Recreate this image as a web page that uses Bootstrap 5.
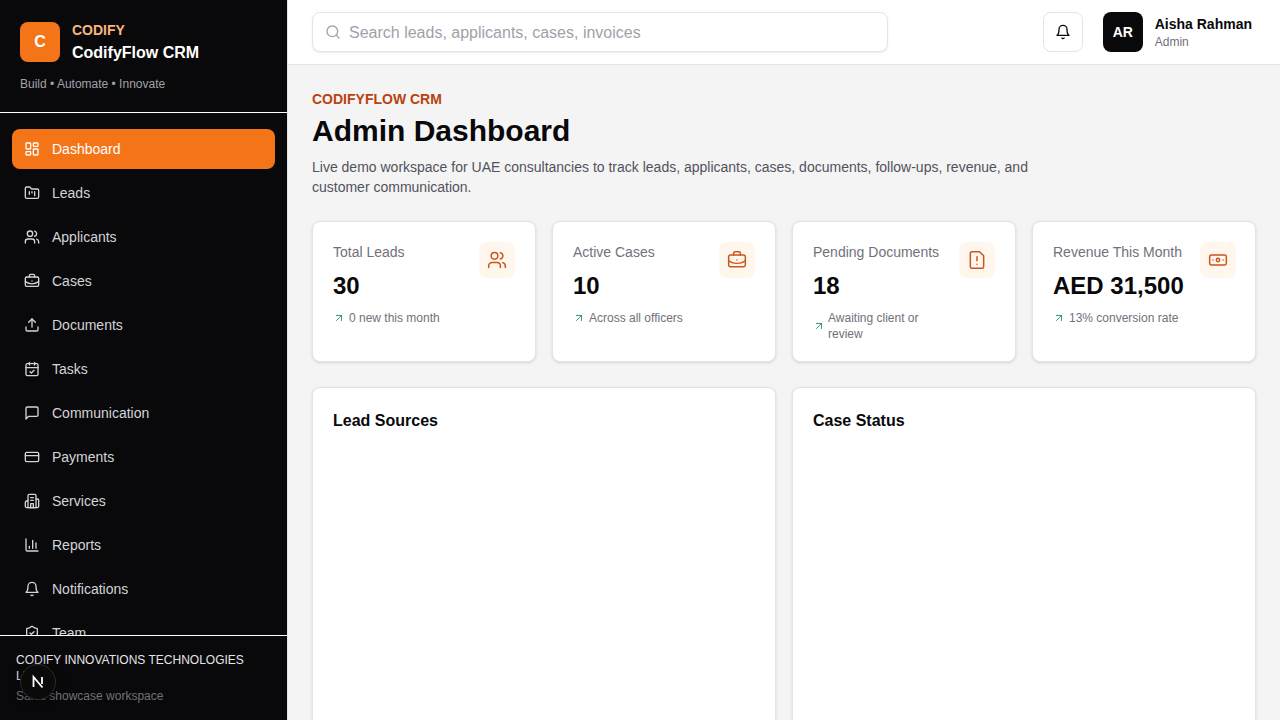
<!DOCTYPE html>
<html lang="en">
<head>
<meta charset="utf-8">
<title>CodifyFlow CRM</title>
<link href="https://cdn.jsdelivr.net/npm/bootstrap@5.3.0/dist/css/bootstrap.min.css" rel="stylesheet">
<style>
html,body{height:720px;overflow:hidden}
body{font-family:"Liberation Sans",Arial,sans-serif;background:#f4f4f5;color:#09090b}
svg.ico{fill:none;stroke:currentColor;stroke-width:2;stroke-linecap:round;stroke-linejoin:round;flex:none}
.side{width:288px;height:720px;background:#09090b;flex:none;border-right:1px solid #e4e4e7}
.brandbox{height:113px;padding:20px 20px 0;border-bottom:1px solid #fff;flex:none}
.brandrow{gap:12px;height:44px}
.brandtext{align-self:flex-start}
.logo{width:40px;height:40px;background:#f47518;color:#fff;border-radius:8px;font-weight:700;font-size:16px}
.brand-top{font-size:14px;line-height:20px;font-weight:700;color:#f5b77f}
.brand-name{font-size:16px;line-height:24px;font-weight:700;color:#fff;margin-top:1px}
.tagline{font-size:12px;line-height:16px;color:#a1a1aa;margin-top:12px}
.sidenav{flex:1 1 0;min-height:0;overflow:hidden;padding:16px 12px 0;gap:4px}
.sidelink{height:40px;flex:none;padding:0 12px;gap:12px;border-radius:8px;color:#d4d4d8;font-size:14px;text-decoration:none}
.sidelink.on{background:#f47518;color:#fff}
.sidefoot{height:85px;flex:none;border-top:1px solid #fff;padding:16px 16px 0;font-size:12px;line-height:16px;color:#e4e4e7}
.footname{width:240px}
.sidefoot p{color:#71717a}
.nxt{position:fixed;left:20px;top:664px;width:36px;height:36px;border-radius:50%;background:#0a0a0a;border:1px solid #2b2b2b;color:#fff;box-shadow:0 0 8px rgba(0,0,0,.5)}
.mainwrap{min-width:0}
.topbar{height:65px;background:#fff;border-bottom:1px solid #e4e4e7;padding:0 24px;flex:none}
.searchbox{width:576px;height:40px;border:1px solid #e4e4e7;border-radius:8px;background:#fff;box-shadow:0 1px 2px rgba(0,0,0,.08);padding:1px 12px 0;gap:8px;color:#a1a1aa;font-size:16px}
.searchbox svg{margin-top:-1px}
.topright{gap:16px}
.bellbtn{width:40px;height:40px;border:1px solid #e4e4e7;border-radius:8px;background:#fff;color:#09090b;padding:0}
.userchip{gap:12px;padding:0 4px}
.avatar{width:40px;height:40px;border-radius:8px;background:#09090b;color:#fff;font-weight:700;font-size:14px}
.uname{font-size:14px;line-height:20px;font-weight:700}
.urole{font-size:12px;line-height:16px;color:#71717a}
.workspace{padding:24px;min-height:0;overflow:hidden}
.eyebrow{font-size:14px;line-height:20px;font-weight:700;color:#b8430f}
.pagetitle{font-size:30px;line-height:36px;font-weight:700;margin:4px 0 8px}
.intro{font-size:14px;line-height:20px;color:#52525b;width:768px;margin:0}
.statgrid{display:grid;grid-template-columns:repeat(4,minmax(0,1fr));gap:16px;margin-top:24px}
.statcard{height:141px;background:#fff;border:1px solid #e4e4e7;border-radius:8px;box-shadow:0 1px 3px rgba(0,0,0,.12);padding:20px}
.statlabel{font-size:14px;line-height:20px;color:#71717a}
.statval{font-size:24px;line-height:32px;font-weight:700;margin-top:8px}
.statnote{font-size:12px;line-height:16px;color:#71717a;margin-top:8px;gap:4px}
.statnote.tight{gap:3px;width:124px}
.statnote svg{color:#3b9a7c}
.staticon{width:36px;height:36px;border-radius:8px;background:#fff7ed;color:#c9561c;flex:none}
.staticon.nudge{margin-right:-1px}
.staticon svg.ico{stroke-width:1.8}
.chartgrid{display:grid;grid-template-columns:repeat(2,minmax(0,1fr));gap:16px;margin-top:25px}
.chartcard{height:500px;background:#fff;border:1px solid #e4e4e7;border-radius:8px;box-shadow:0 1px 3px rgba(0,0,0,.12);padding:21px 20px 20px}
.charttitle{font-size:16px;line-height:24px;font-weight:700;margin:0}
</style>
</head>
<body class="d-flex">
<aside class="side d-flex flex-column">
  <div class="brandbox">
    <div class="brandrow d-flex align-items-center">
      <div class="logo d-flex align-items-center justify-content-center">C</div>
      <div class="brandtext"><div class="brand-top">CODIFY</div><div class="brand-name">CodifyFlow CRM</div></div>
    </div>
    <div class="tagline">Build • Automate • Innovate</div>
  </div>
  <nav class="sidenav d-flex flex-column">
    <a class="sidelink on d-flex align-items-center" href="#"><svg class="ico" width="16" height="16" viewBox="0 0 24 24"><rect x="3" y="3" width="7" height="9" rx="1"/><rect x="14" y="3" width="7" height="5" rx="1"/><rect x="14" y="12" width="7" height="9" rx="1"/><rect x="3" y="16" width="7" height="5" rx="1"/></svg>Dashboard</a>
    <a class="sidelink d-flex align-items-center" href="#"><svg class="ico" width="16" height="16" viewBox="0 0 24 24"><path d="M4 20h16a2 2 0 0 0 2-2V8a2 2 0 0 0-2-2h-7.9a2 2 0 0 1-1.7-.9l-.8-1.2A2 2 0 0 0 7.9 3H4a2 2 0 0 0-2 2v13c0 1.1.9 2 2 2Z"/><path d="M8 10v4M12 10v2M16 10v6"/></svg>Leads</a>
    <a class="sidelink d-flex align-items-center" href="#"><svg class="ico" width="16" height="16" viewBox="0 0 24 24"><path d="M16 21v-2a4 4 0 0 0-4-4H6a4 4 0 0 0-4 4v2"/><circle cx="9" cy="7" r="4"/><path d="M22 21v-2a4 4 0 0 0-3-3.87M16 3.13a4 4 0 0 1 0 7.75"/></svg>Applicants</a>
    <a class="sidelink d-flex align-items-center" href="#"><svg class="ico" width="16" height="16" viewBox="0 0 24 24"><path d="M12 12h.01"/><path d="M16 6V4a2 2 0 0 0-2-2h-4a2 2 0 0 0-2 2v2"/><path d="M22 13a18.15 18.15 0 0 1-20 0"/><rect x="2" y="6" width="20" height="14" rx="2"/></svg>Cases</a>
    <a class="sidelink d-flex align-items-center" href="#"><svg class="ico" width="16" height="16" viewBox="0 0 24 24"><path d="M21 15v4a2 2 0 0 1-2 2H5a2 2 0 0 1-2-2v-4"/><path d="M17 8l-5-5-5 5"/><path d="M12 3v12"/></svg>Documents</a>
    <a class="sidelink d-flex align-items-center" href="#"><svg class="ico" width="16" height="16" viewBox="0 0 24 24"><path d="M8 2v4M16 2v4"/><rect x="3" y="4" width="18" height="18" rx="2"/><path d="M3 10h18"/><path d="m9 16 2 2 4-4"/></svg>Tasks</a>
    <a class="sidelink d-flex align-items-center" href="#"><svg class="ico" width="16" height="16" viewBox="0 0 24 24"><path d="M21 15a2 2 0 0 1-2 2H7l-4 4V5a2 2 0 0 1 2-2h14a2 2 0 0 1 2 2z"/></svg>Communication</a>
    <a class="sidelink d-flex align-items-center" href="#"><svg class="ico" width="16" height="16" viewBox="0 0 24 24"><rect x="2" y="5" width="20" height="14" rx="2"/><path d="M2 10h20"/></svg>Payments</a>
    <a class="sidelink d-flex align-items-center" href="#"><svg class="ico" width="16" height="16" viewBox="0 0 24 24"><path d="M6 22V4a2 2 0 0 1 2-2h8a2 2 0 0 1 2 2v18Z"/><path d="M6 12H4a2 2 0 0 0-2 2v6a2 2 0 0 0 2 2h16a2 2 0 0 0 2-2v-9a2 2 0 0 0-2-2h-2"/><path d="M10 7h4M10 11h4"/><path d="M10 22v-6h4v6"/></svg>Services</a>
    <a class="sidelink d-flex align-items-center" href="#"><svg class="ico" width="16" height="16" viewBox="0 0 24 24"><path d="M3 3v16a2 2 0 0 0 2 2h16"/><path d="M8 17v-3M13 17V5M18 17V9"/></svg>Reports</a>
    <a class="sidelink d-flex align-items-center" href="#"><svg class="ico" width="16" height="16" viewBox="0 0 24 24"><path d="M6 8a6 6 0 0 1 12 0c0 7 3 9 3 9H3s3-2 3-9"/><path d="M10.3 21a1.94 1.94 0 0 0 3.4 0"/></svg>Notifications</a>
    <a class="sidelink d-flex align-items-center" href="#"><svg class="ico" width="16" height="16" viewBox="0 0 24 24"><path d="M20 13c0 5-3.5 7.5-7.66 8.95a1 1 0 0 1-.67-.01C7.5 20.5 4 18 4 13V6a1 1 0 0 1 1-1c2 0 4.5-1.2 6.24-2.72a1.17 1.17 0 0 1 1.52 0C14.51 3.81 17 5 19 5a1 1 0 0 1 1 1z"/><path d="m9 12 2 2 4-4"/></svg>Team</a>
  </nav>
  <div class="sidefoot">
    <div class="footname">CODIFY INNOVATIONS TECHNOLOGIES LLC</div>
    <p class="mb-0 mt-1">Sales showcase workspace</p>
  </div>
</aside>
<div class="nxt d-flex align-items-center justify-content-center"><svg width="16" height="16" viewBox="0 0 16 16" fill="none" stroke="#fff" stroke-width="1.8"><path d="M3.5 13V3l9 10.5"/><path d="M12 3v7"/></svg></div>
<div class="mainwrap flex-grow-1 d-flex flex-column">
  <header class="topbar d-flex align-items-center justify-content-between">
    <div class="searchbox d-flex align-items-center"><svg class="ico" width="16" height="16" viewBox="0 0 24 24"><circle cx="11" cy="11" r="8"/><path d="m21 21-4.3-4.3"/></svg><span>Search leads, applicants, cases, invoices</span></div>
    <div class="topright d-flex align-items-center">
      <button class="bellbtn btn d-flex align-items-center justify-content-center" type="button" aria-label="Notifications"><svg class="ico" width="16" height="16" viewBox="0 0 24 24"><path d="M6 8a6 6 0 0 1 12 0c0 7 3 9 3 9H3s3-2 3-9"/><path d="M10.3 21a1.94 1.94 0 0 0 3.4 0"/></svg></button>
      <div class="userchip d-flex align-items-center">
        <div class="avatar d-flex align-items-center justify-content-center">AR</div>
        <div><div class="uname">Aisha Rahman</div><div class="urole">Admin</div></div>
      </div>
    </div>
  </header>
  <main class="workspace flex-grow-1">
    <div class="eyebrow">CODIFYFLOW CRM</div>
    <h1 class="pagetitle">Admin Dashboard</h1>
    <p class="intro">Live demo workspace for UAE consultancies to track leads, applicants, cases, documents, follow-ups, revenue, and customer communication.</p>
    <div class="statgrid">
      <div class="statcard d-flex justify-content-between align-items-start">
        <div><div class="statlabel">Total Leads</div><div class="statval">30</div><div class="statnote d-flex align-items-center"><svg class="ico" width="12" height="12" viewBox="0 0 24 24"><path d="M7 7h10v10M7 17 17 7"/></svg><span>0 new this month</span></div></div>
        <div class="staticon d-flex align-items-center justify-content-center"><svg class="ico" width="20" height="20" viewBox="0 0 24 24"><path d="M16 21v-2a4 4 0 0 0-4-4H6a4 4 0 0 0-4 4v2"/><circle cx="9" cy="7" r="4"/><path d="M22 21v-2a4 4 0 0 0-3-3.87M16 3.13a4 4 0 0 1 0 7.75"/></svg></div>
      </div>
      <div class="statcard d-flex justify-content-between align-items-start">
        <div><div class="statlabel">Active Cases</div><div class="statval">10</div><div class="statnote d-flex align-items-center"><svg class="ico" width="12" height="12" viewBox="0 0 24 24"><path d="M7 7h10v10M7 17 17 7"/></svg><span>Across all officers</span></div></div>
        <div class="staticon d-flex align-items-center justify-content-center"><svg class="ico" width="20" height="20" viewBox="0 0 24 24"><path d="M12 12h.01"/><path d="M16 6V4a2 2 0 0 0-2-2h-4a2 2 0 0 0-2 2v2"/><path d="M22 13a18.15 18.15 0 0 1-20 0"/><rect x="2" y="6" width="20" height="14" rx="2"/></svg></div>
      </div>
      <div class="statcard d-flex justify-content-between align-items-start">
        <div><div class="statlabel">Pending Documents</div><div class="statval">18</div><div class="statnote tight d-flex align-items-center"><svg class="ico" width="12" height="12" viewBox="0 0 24 24"><path d="M7 7h10v10M7 17 17 7"/></svg><span>Awaiting client or review</span></div></div>
        <div class="staticon d-flex align-items-center justify-content-center"><svg class="ico" width="20" height="20" viewBox="0 0 24 24"><path d="M15 2H6a2 2 0 0 0-2 2v16a2 2 0 0 0 2 2h12a2 2 0 0 0 2-2V7Z"/><path d="M12 8v5M12 17h.01"/></svg></div>
      </div>
      <div class="statcard d-flex justify-content-between align-items-start">
        <div><div class="statlabel">Revenue This Month</div><div class="statval">AED 31,500</div><div class="statnote d-flex align-items-center"><svg class="ico" width="12" height="12" viewBox="0 0 24 24"><path d="M7 7h10v10M7 17 17 7"/></svg><span>13% conversion rate</span></div></div>
        <div class="staticon nudge d-flex align-items-center justify-content-center"><svg class="ico" width="20" height="20" viewBox="0 0 24 24"><rect x="2" y="6" width="20" height="12" rx="2"/><circle cx="12" cy="12" r="2"/><path d="M6 12h.01M18 12h.01"/></svg></div>
      </div>
    </div>
    <div class="chartgrid">
      <section class="chartcard"><h2 class="charttitle">Lead Sources</h2></section>
      <section class="chartcard"><h2 class="charttitle">Case Status</h2></section>
    </div>
  </main>
</div>
<script src="https://cdn.jsdelivr.net/npm/bootstrap@5.3.0/dist/js/bootstrap.bundle.min.js"></script>
</body>
</html>
